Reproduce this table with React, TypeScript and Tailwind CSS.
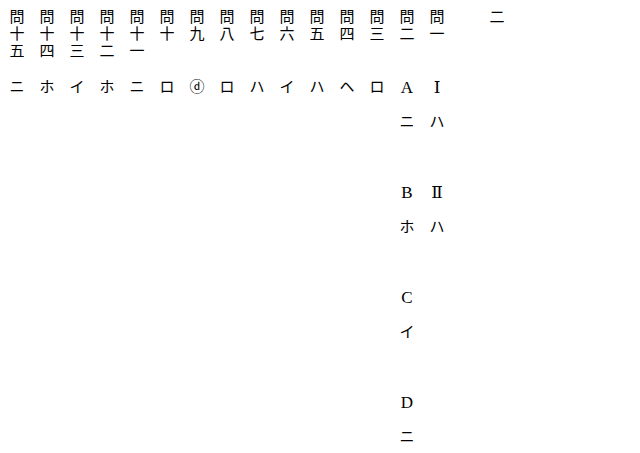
const questions: { label: string[]; answers: string[] }[] = [
  { label: ['問', '十', '五'], answers: ['ニ'] },
  { label: ['問', '十', '四'], answers: ['ホ'] },
  { label: ['問', '十', '三'], answers: ['イ'] },
  { label: ['問', '十', '二'], answers: ['ホ'] },
  { label: ['問', '十', '一'], answers: ['ニ'] },
  { label: ['問', '十'], answers: ['ロ'] },
  { label: ['問', '九'], answers: ['ⓓ'] },
  { label: ['問', '八'], answers: ['ロ'] },
  { label: ['問', '七'], answers: ['ハ'] },
  { label: ['問', '六'], answers: ['イ'] },
  { label: ['問', '五'], answers: ['ハ'] },
  { label: ['問', '四'], answers: ['ヘ'] },
  { label: ['問', '三'], answers: ['ロ'] },
  { label: ['問', '二'], answers: ['A', 'ニ', '', 'B', 'ホ', '', 'C', 'イ', '', 'D', 'ニ'] },
  { label: ['問', '一'], answers: ['Ⅰ', 'ハ', '', 'Ⅱ', 'ハ'] },
];

// sub-question markers are set a little larger than the kana
const isMarker = (s: string) => /^[A-DⅠⅡ]$/.test(s);

export default function App() {
  return (
    <div
      className="w-[640px] h-[453px] bg-white text-black overflow-hidden text-[15px]"
      style={{ fontFamily: '"Liberation Serif", "DejaVu Serif", "Noto Sans CJK JP", serif' }}
    >
      <div className="flex pl-[2px] pt-[9px]">
        {questions.map((q, i) => (
          <div key={i} className="w-[30px] flex flex-col items-center">
            <div className="h-[61px] flex flex-col items-center">
              {q.label.map((c, j) => (
                <div key={j} className="h-[17px] leading-[17px]">{c}</div>
              ))}
            </div>
            {q.answers.map((a, j) => (
              <div key={j} className={isMarker(a) ? 'h-[35px] leading-[35px] text-[17px]' : 'h-[35px] leading-[35px]'}>
                {a}
              </div>
            ))}
          </div>
        ))}
        {/* empty column before the section number */}
        <div className="w-[30px]" />
        <div className="w-[30px] flex flex-col items-center">
          <div className="h-[17px] leading-[17px]">二</div>
        </div>
      </div>
    </div>
  );
}
